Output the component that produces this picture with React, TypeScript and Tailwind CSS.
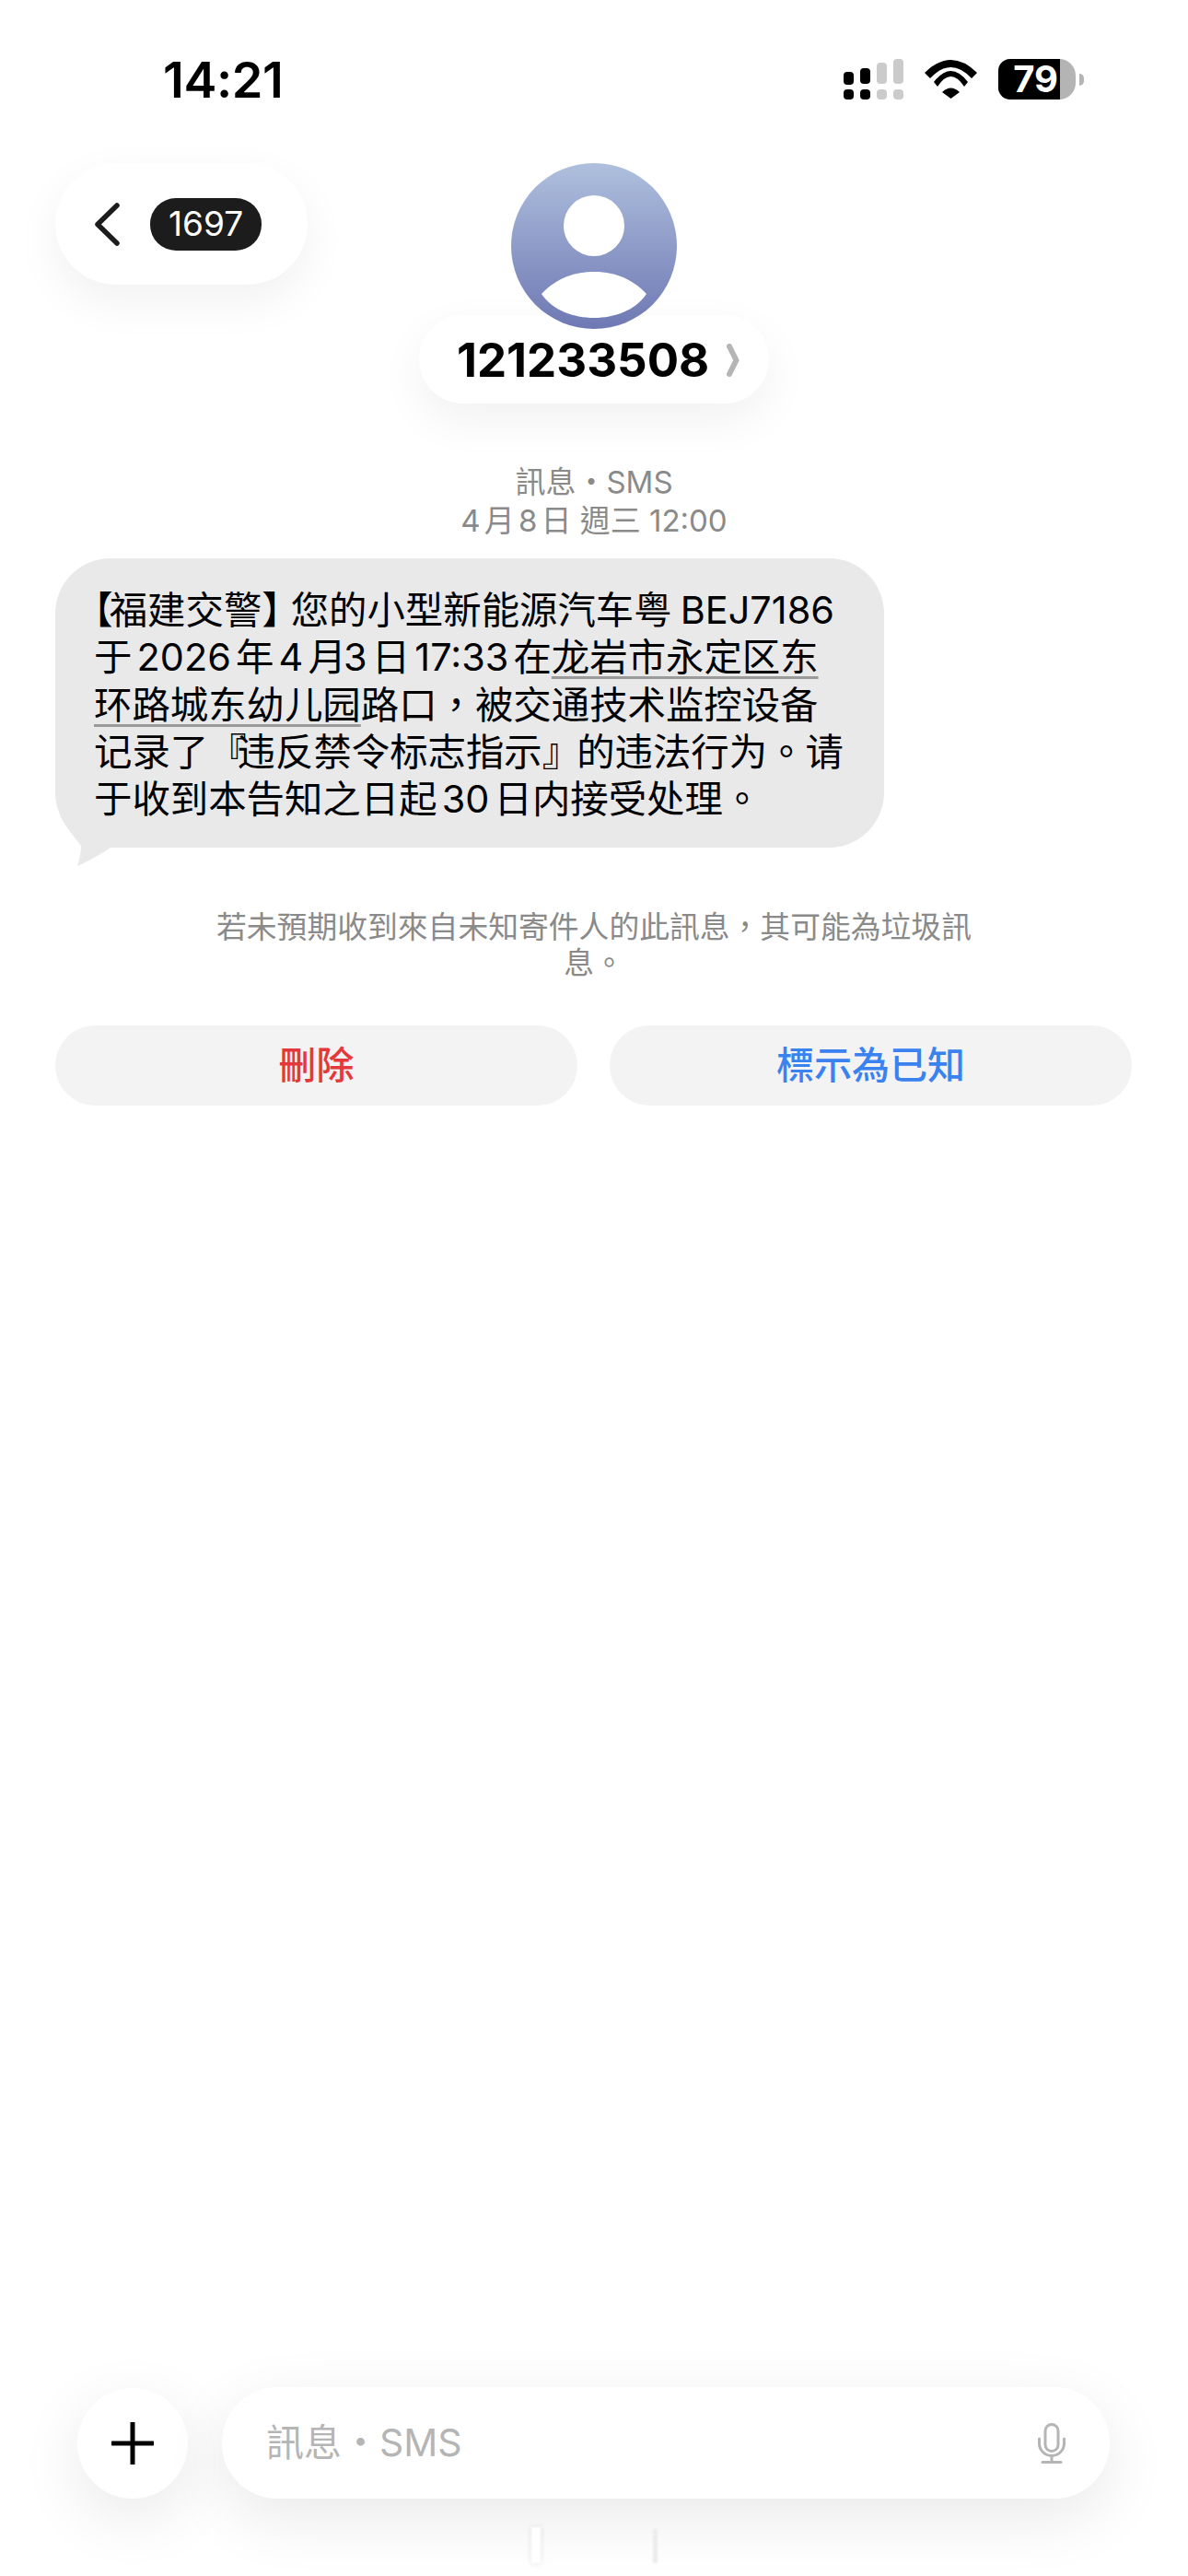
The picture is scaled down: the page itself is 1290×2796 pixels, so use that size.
import React from "react";

const softShadow = "shadow-[0_18px_50px_rgba(0,0,0,0.06)]";
const barShadow = "shadow-[0_20px_70px_rgba(0,0,0,0.09)]";

const SignalIcon = () => (
  <svg width="65" height="44" viewBox="0 0 65 44" className="shrink-0">
    <g fill="#000">
      <rect x="0" y="14" width="11" height="14" rx="4" />
      <rect x="18" y="10" width="11" height="17" rx="4" />
      <rect x="0" y="33" width="11" height="11" rx="4" />
      <rect x="18" y="33" width="11" height="11" rx="4" />
    </g>
    <g fill="#cbcbcb">
      <rect x="36" y="4" width="11" height="23" rx="4" />
      <rect x="54" y="0" width="11" height="27" rx="4" />
      <rect x="36" y="33" width="11" height="11" rx="4" />
      <rect x="54" y="33" width="11" height="11" rx="4" />
    </g>
  </svg>
);

const WifiIcon = () => (
  <svg width="57" height="42" viewBox="0 0 57 42" className="shrink-0">
    <path d="M0 14 Q28.5 -14 57 14 L51 20 Q28.5 -4 6 20 Z" fill="#000" />
    <path d="M10 24 Q28.5 0 47 24 L43 29 Q28.5 7 14 29 Z" fill="#000" />
    <path d="M19 35 Q28.5 26 38 35 L28.5 42 Z" fill="#000" />
  </svg>
);

const Battery = () => (
  <div className="flex items-center gap-[4px]">
    <div className="flex h-[44px] w-[84px] rounded-l-[13px] rounded-r-[18px] bg-[#b4b4b4]">
      <div className="flex h-full w-[67px] items-center justify-end rounded-l-[13px] bg-black pr-[2px] text-[40px] leading-none font-bold text-white">
        79
      </div>
    </div>
    <div className="h-[13px] w-[5px] rounded-r-full bg-[#b4b4b4]" />
  </div>
);

const MicIcon = () => (
  <svg width="30" height="44" viewBox="0 0 30 44" fill="none" stroke="#b5b5b5" strokeWidth="3" className="shrink-0">
    <rect x="8" y="1.5" width="14" height="29" rx="7" />
    <path d="M1.5 17 V22 a13.5 13.5 0 0 0 27 0 V17" strokeLinecap="round" />
    <path d="M15 36 V42" />
    <path d="M5 42.5 H25" strokeLinecap="round" />
  </svg>
);

// 繁中字形的標點（置中）
const P = ({ children }: { children: string }) => (
  <span className="font-['Noto_Sans_CJK_TC',sans-serif] leading-none">{children}</span>
);

export default function App() {
  return (
    <div className="relative flex h-[2796px] w-[1290px] flex-col overflow-hidden bg-white font-['Inter','Noto_Sans_CJK_TC',sans-serif] text-black [text-autospace:normal]">
      {/* status bar */}
      <div className="flex h-[177px] shrink-0 items-start justify-between pt-[64px] pr-[113px] pl-[177px]">
        <div className="text-[54px] leading-[46px] font-semibold tracking-[-0.4px]">14:21</div>
        <div className="flex items-center gap-[23px]">
          <SignalIcon />
          <WifiIcon />
          <Battery />
        </div>
      </div>

      {/* header */}
      <div className="grid shrink-0 grid-cols-[1fr_auto_1fr] items-start px-[60px]">
        <div className={`flex h-[132px] w-[274px] items-center gap-[33px] rounded-[66px] bg-white pl-[43px] ${softShadow}`}>
          <svg width="27" height="47" viewBox="0 0 27 47" fill="none" className="shrink-0">
            <path d="M24 3 L3 23.5 L24 44" stroke="#1c1c1c" strokeWidth="5.5" strokeLinecap="round" strokeLinejoin="round" />
          </svg>
          <div className="flex h-[57px] w-[121px] items-center justify-center rounded-[28px] bg-[#1c1c1c] text-[37px] text-white">
            1697
          </div>
        </div>

        <div className="flex flex-col items-center">
          <div className="relative z-10 h-[180px] w-[180px] rounded-full bg-gradient-to-b from-[#afc0dd] to-[#6f78b3]">
            <svg width="180" height="180" viewBox="0 0 180 180">
              <ellipse cx="90" cy="68" rx="33" ry="33" fill="#fff" />
              <path d="M33 142 C50 124 70 118 90 118 C110 118 130 124 147 142 C135 160 112 168 90 168 C68 168 45 160 33 142 Z" fill="#fff" />
            </svg>
          </div>
          <div className={`-mt-[15px] flex h-[96px] w-[380px] items-center gap-[19px] rounded-[48px] bg-white pt-[2px] pl-[41px] ${softShadow}`}>
            <span className="text-[51px] font-bold">121233508</span>
            <svg width="14" height="36" viewBox="0 0 14 36" fill="none" className="shrink-0">
              <path d="M3 3 L10.5 18 L3 33" stroke="#b5b5b5" strokeWidth="6" strokeLinecap="round" strokeLinejoin="round" />
            </svg>
          </div>
        </div>
        <div />
      </div>

      {/* timestamp */}
      <div className="mt-[64px] flex shrink-0 flex-col items-center text-[33px] leading-[42px] text-[#8a8a8a]">
        <div>訊息・SMS</div>
        <div>4月8日 週三 12:00</div>
      </div>

      {/* message bubble */}
      <div className="relative mt-[20px] ml-[60px] w-[900px] shrink-0 rounded-[60px] bg-[#e9e9e9] pt-[31px] pr-[20px] pb-[26.5px] pl-[42px] font-['Inter','Noto_Sans_CJK_SC',sans-serif] text-[41.4px] leading-[51.3px] text-black [text-spacing-trim:trim-start]">
        <svg width="60" height="60" viewBox="0 0 60 60" className="absolute bottom-[-20px] left-0">
          <path d="M5 5 C10 15 20 28 28 38 C28 45 26 54 24 60 C34 56 48 48 60 40 L60 0 L5 0 Z" fill="#e9e9e9" />
        </svg>
        <div className="relative whitespace-nowrap">
          <span className="tracking-[-4px]">【</span>福建交警<span className="tracking-[-10px]">】</span>您的小型新能源汽车粤<span className="ml-[4px]">BEJ7186</span>
          <br />
          于2026年4<span className="tracking-[-8px]">月</span>3日17:33在
          <span className="underline decoration-[#9a9a9a] decoration-[3px] underline-offset-[6px]">
            龙岩市永定区东
            <br />
            环路城东幼儿园
          </span>
          路口<P>，</P>被交通技术监控设备
          <br />
          记录了<span className="tracking-[-10px]">『</span>违反禁令标志指示<span className="tracking-[-4px]">』</span>的违法行为<P>。</P>请
          <br />
          于收到本告知之日起30日内接受处理<P>。</P>
        </div>
      </div>

      {/* spam notice */}
      <div className="mt-[67px] flex shrink-0 flex-col items-center text-[32.8px] leading-[39px] text-[#8a8a8a]">
        <div>若未預期收到來自未知寄件人的此訊息，其可能為垃圾訊</div>
        <div>息。</div>
      </div>

      {/* actions */}
      <div className="mt-[48px] grid shrink-0 grid-cols-2 gap-[35px] pr-[61px] pl-[60px]">
        <div className="flex h-[87px] items-center justify-center rounded-[44px] bg-[#f3f3f3] text-[41px] font-medium text-[#e5383b]">
          刪除
        </div>
        <div className="flex h-[87px] items-center justify-center rounded-[44px] bg-[#f3f3f3] text-[41px] font-medium text-[#3a82f0]">
          標示為已知
        </div>
      </div>

      {/* composer */}
      <div className="mt-auto flex items-center gap-[37px] pr-[85px] pb-[84px] pl-[84px]">
        <div className={`flex h-[120px] w-[120px] shrink-0 items-center justify-center rounded-full bg-white ${barShadow}`}>
          <svg width="46" height="46" viewBox="0 0 46 46" fill="none">
            <path d="M23 1 V45 M1 23 H45" stroke="#000" strokeWidth="5" strokeLinecap="round" />
          </svg>
        </div>
        <div className={`flex h-[121px] flex-1 items-center justify-between rounded-[60px] bg-white pr-[48px] pl-[48px] ${barShadow}`}>
          <span className="text-[41px] text-[#b5b5b5]">訊息・SMS</span>
          <MicIcon />
        </div>
      </div>

      {/* home indicator leftovers over the shadow */}
      <div className="absolute bottom-[14px] left-[577px] h-[39px] w-[10px] bg-white shadow-[0_0_6px_rgba(0,0,0,0.12)] blur-[1px]" />
      <div className="absolute bottom-[14px] left-[709px] h-[37px] w-[5px] bg-[#ececec] blur-[1px]" />
    </div>
  );
}
